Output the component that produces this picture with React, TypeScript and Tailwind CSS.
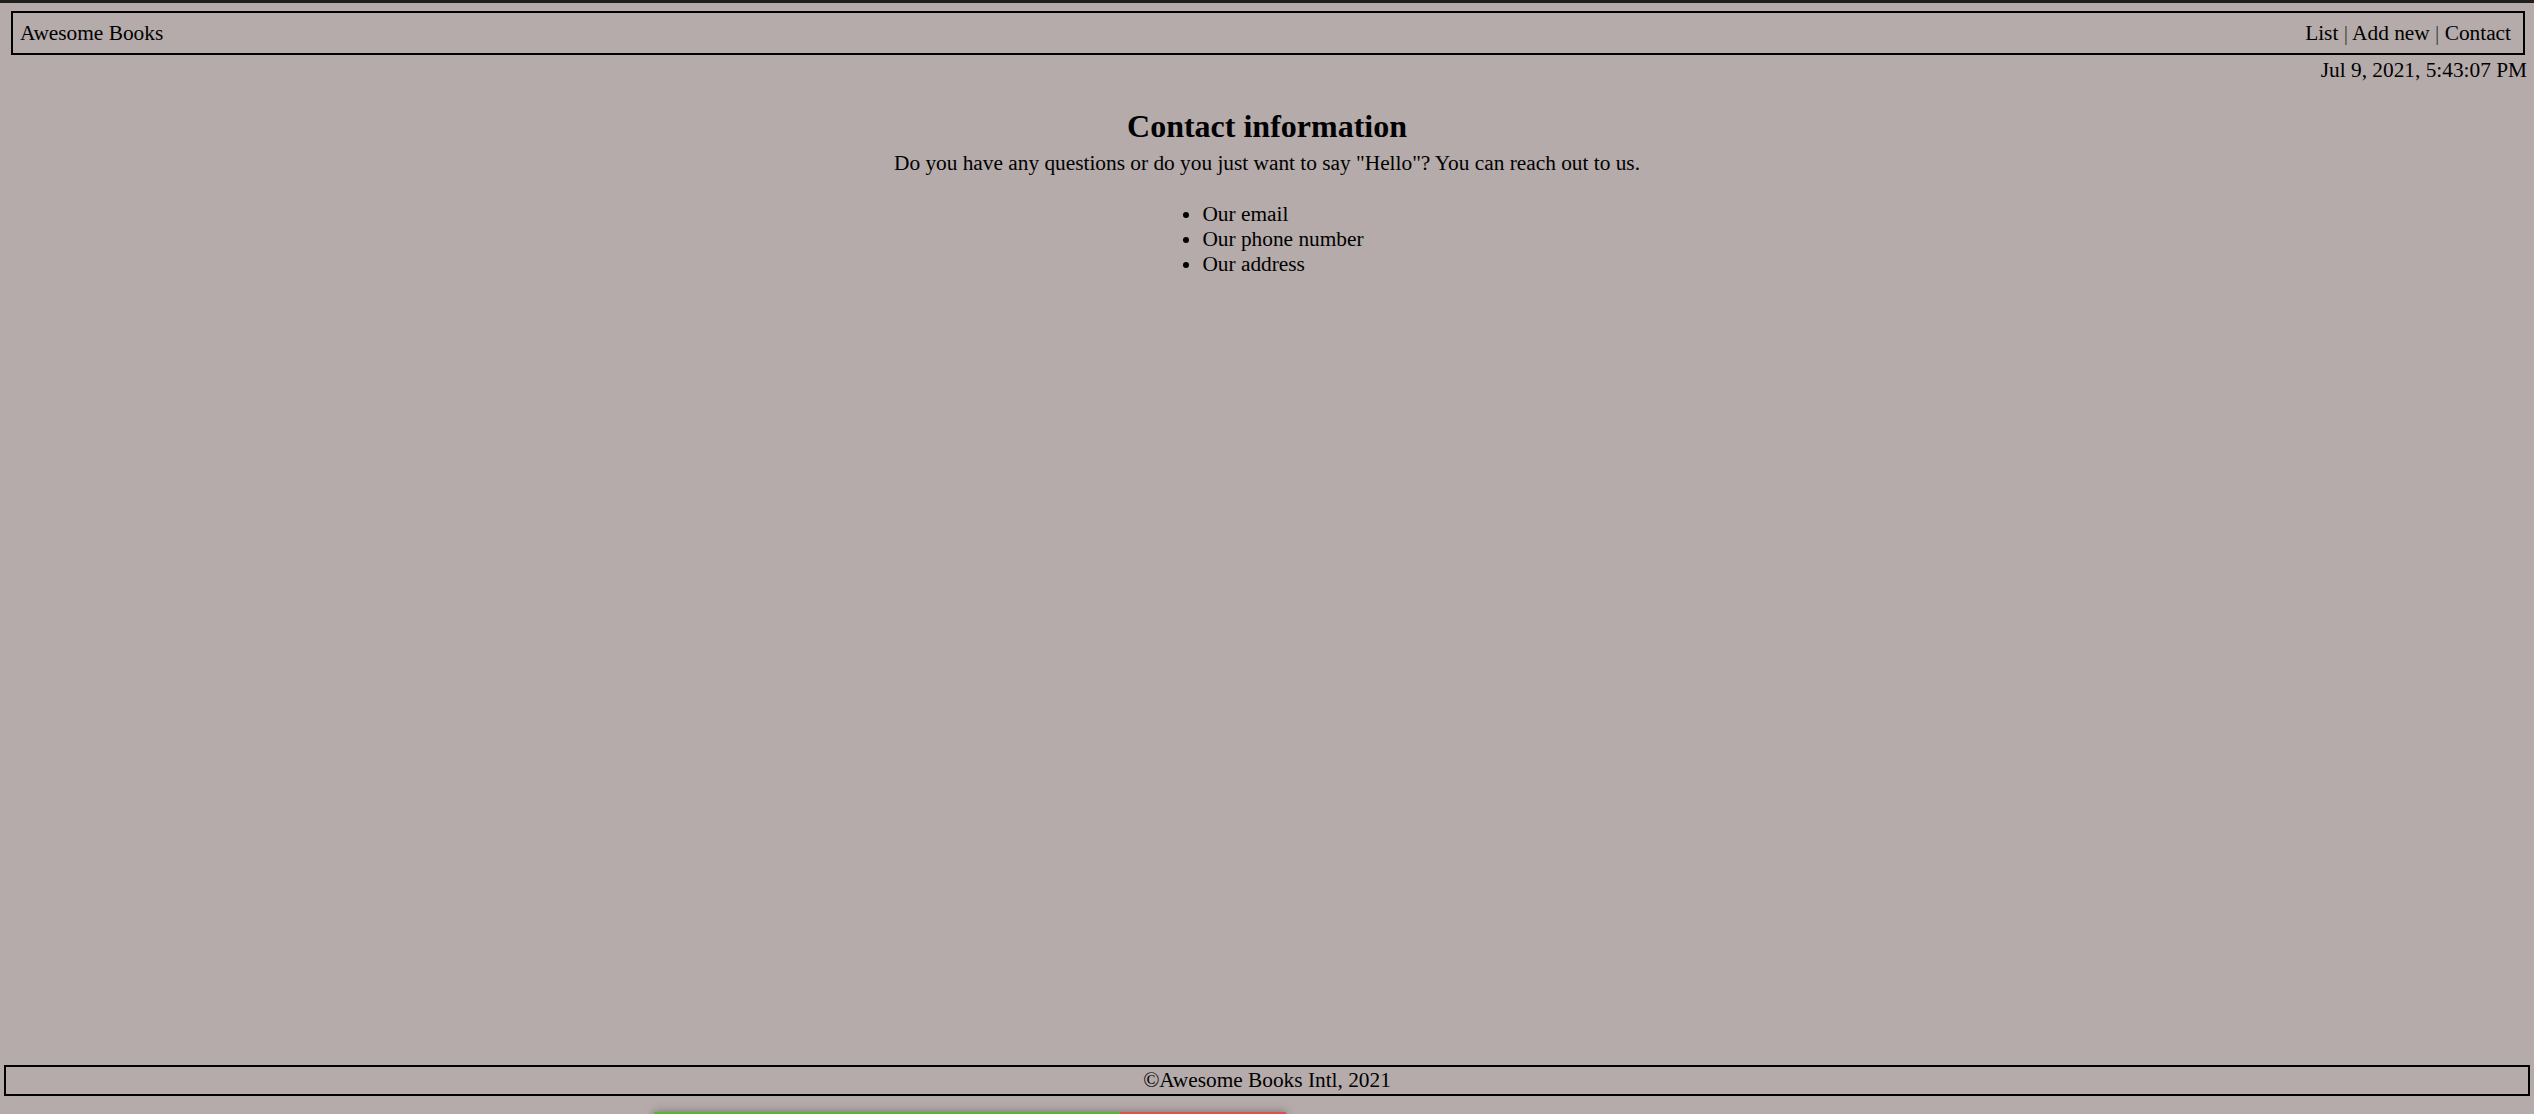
import React from 'react';

const LINKS = ['List', 'Add new', 'Contact'];
const ITEMS = ['Our email', 'Our phone number', 'Our address'];

export default function App() {
  return (
    <div className="relative min-h-screen flex flex-col bg-[#b5abaa] text-black font-['Liberation_Serif',serif] text-[21.33px] leading-[normal] overflow-hidden">
      <div className="h-[3px] bg-[#1e1e1e]" />

      {/* Header */}
      <nav className="mt-[8px] ml-[11px] mr-[9px] flex items-center justify-between border-2 border-black pl-[7px] pr-[12px] pt-[8px] pb-[7px]">
        <span>Awesome Books</span>
        <div className="whitespace-pre">
          {LINKS.map((l, i) => (
            <React.Fragment key={l}>
              {i > 0 && <span className="text-[#3a3a3a]"> | </span>}
              <a href="#">{l}</a>
            </React.Fragment>
          ))}
        </div>
      </nav>

      <p className="mt-[3px] pr-[7px] text-right">Jul 9, 2021, 5:43:07 PM</p>

      {/* Contact section */}
      <main className="flex-1 flex flex-col items-center text-center">
        <h2 className="mt-[25px] text-[32px] font-bold">Contact information</h2>
        <p className="mt-[6px]">
          Do you have any questions or do you just want to say "Hello"? You can reach out to us.
        </p>
        <ul className="mt-[26px] w-fit pl-[32px] list-disc text-left [&>li]:leading-[25px]">
          {ITEMS.map((t) => (
            <li key={t}>{t}</li>
          ))}
        </ul>
      </main>

      <footer className="mx-[4px] mb-[18px] border-2 border-black py-[1px] text-center">
        ©Awesome Books Intl, 2021
      </footer>

      {/* toast bar peeking at the bottom */}
      <div className="absolute left-[654px] top-[1112px] flex h-[20px] w-[632px] shadow-[0_0_10px_rgba(0,0,0,0.35)]">
        <div className="w-[466px] bg-[#5cb335]" />
        <div className="flex-1 bg-[#d9534f]" />
      </div>
    </div>
  );
}
